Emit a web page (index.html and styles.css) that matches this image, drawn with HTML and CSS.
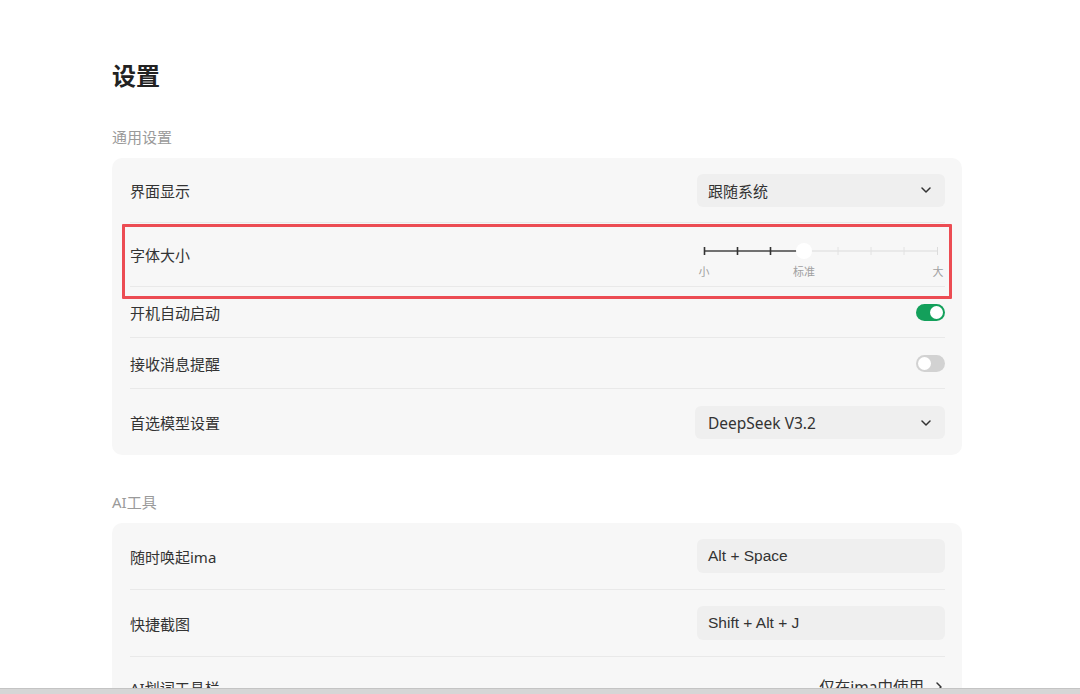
FILE: index.html
```html
<!DOCTYPE html>
<html lang="zh-CN">
<head>
  <meta charset="UTF-8">
  <title>设置</title>
  <link rel="stylesheet" href="styles.css">
</head>
<body>
  <div class="page">
    <h1 class="title">设置</h1>

    <div class="section-label">通用设置</div>
    <div class="card">
      <div class="row row-tall">
        <span class="label">界面显示</span>
        <div class="select">
          <span>跟随系统</span>
          <svg class="chev" width="10" height="6" viewBox="0 0 10 6"><path d="M1 1l4 4 4-4" fill="none" stroke="#333" stroke-width="1.5" stroke-linecap="round" stroke-linejoin="round"/></svg>
        </div>
      </div>
      <div class="row row-slider">
        <span class="label">字体大小</span>
        <svg class="slider" width="248" height="64" viewBox="0 0 248 64">
          <line x1="7" y1="26" x2="107" y2="26" stroke="#444" stroke-width="1.4"/>
          <line x1="107" y1="26" x2="241" y2="26" stroke="#e4e4e4" stroke-width="1.4"/>
          <line x1="7.5" y1="22" x2="7.5" y2="30" stroke="#333" stroke-width="1.6"/>
          <line x1="40.5" y1="22" x2="40.5" y2="30" stroke="#333" stroke-width="1.6"/>
          <line x1="73.5" y1="22" x2="73.5" y2="30" stroke="#333" stroke-width="1.6"/>
          <line x1="141" y1="22" x2="141" y2="30" stroke="#e2e2e2" stroke-width="1"/>
          <line x1="174" y1="22" x2="174" y2="30" stroke="#e2e2e2" stroke-width="1"/>
          <line x1="207" y1="22" x2="207" y2="30" stroke="#e2e2e2" stroke-width="1"/>
          <line x1="240.5" y1="22" x2="240.5" y2="30" stroke="#dcdcdc" stroke-width="1"/>
          <circle cx="107" cy="26" r="8" fill="#fff"/>
          <text x="7" y="51" text-anchor="middle" class="tick-text">小</text>
          <text x="107" y="51" text-anchor="middle" class="tick-text">标准</text>
          <text x="241" y="51" text-anchor="middle" class="tick-text">大</text>
        </svg>
        <div class="highlight-box"></div>
      </div>
      <div class="row row-short">
        <span class="label">开机自动启动</span>
        <span class="toggle on"></span>
      </div>
      <div class="row row-short">
        <span class="label">接收消息提醒</span>
        <span class="toggle"></span>
      </div>
      <div class="row row-tall row-last">
        <span class="label">首选模型设置</span>
        <div class="select select-wide">
          <span class="latin">DeepSeek V3.2</span>
          <svg class="chev" width="10" height="6" viewBox="0 0 10 6"><path d="M1 1l4 4 4-4" fill="none" stroke="#333" stroke-width="1.5" stroke-linecap="round" stroke-linejoin="round"/></svg>
        </div>
      </div>
    </div>

    <div class="section-label section-gap">AI工具</div>
    <div class="card">
      <div class="row row-key">
        <span class="label">随时唤起ima</span>
        <div class="keybox">Alt + Space</div>
      </div>
      <div class="row row-key">
        <span class="label">快捷截图</span>
        <div class="keybox">Shift + Alt + J</div>
      </div>
      <div class="row row-key row-top">
        <span class="label">AI划词工具栏</span>
        <span class="link">仅在ima中使用
          <svg width="8" height="12" viewBox="0 0 8 12"><path d="M2 2l4 4-4 4" fill="none" stroke="#333" stroke-width="1.5" stroke-linecap="round" stroke-linejoin="round"/></svg>
        </span>
      </div>
    </div>
  </div>
  <div class="bottom-edge"></div>
</body>
</html>
```

FILE: styles.css
```css
* {
  box-sizing: border-box;
}

body {
  margin: 0;
  background: #fff;
  font-family: "Noto Sans", "Noto Sans CJK SC", sans-serif;
  color: #333;
  overflow: hidden;
  height: 694px;
}

.page {
  width: 850px;
  margin-left: 112px;
  padding-top: 58px;
}

.title {
  margin: 0;
  font-size: 24px;
  font-weight: 700;
  line-height: 36px;
  color: #222;
}

.section-label {
  margin-top: 32px;
  font-size: 15px;
  line-height: 22px;
  color: #9a9a9a;
}

.section-gap {
  margin-top: 36px;
}

.card {
  margin-top: 10px;
  background: #f7f7f7;
  border-radius: 10px;
  padding: 0 17px 0 18px;
}

.row {
  position: relative;
  display: flex;
  align-items: center;
  justify-content: space-between;
  border-bottom: 1px solid #e9e9e9;
}

.row-tall {
  height: 65px;
}

.row-slider {
  height: 64px;
}

.row-short {
  height: 51px;
}

.row-last {
  height: 66px;
  border-bottom: none;
  padding-top: 1px;
}

.row-key {
  height: 67px;
}

.row-top {
  align-items: flex-start;
  padding-top: 20px;
  border-bottom: none;
}

.label {
  font-size: 15px;
  color: #333;
}

.select {
  width: 248px;
  height: 33px;
  background: #efefef;
  border-radius: 6px;
  display: flex;
  align-items: center;
  justify-content: space-between;
  padding: 0 14px 0 11px;
  font-size: 15px;
  color: #333;
}

.select-wide {
  width: 250px;
  padding-left: 13px;
}

.latin {
  font-size: 15.5px;
}

.slider {
  display: block;
  margin-top: 5px;
}

.tick-text {
  font-size: 11px;
  fill: #a0a0a0;
  font-family: "Noto Sans CJK SC", sans-serif;
}

.highlight-box {
  position: absolute;
  left: -8px;
  right: -7px;
  top: 1px;
  bottom: -13px;
  border: 3px solid #ec4c53;
  border-radius: 1px;
  pointer-events: none;
}

.toggle {
  position: relative;
  width: 29px;
  height: 17px;
  border-radius: 9px;
  background: #d2d2d2;
}

.toggle::after {
  content: "";
  position: absolute;
  top: 2px;
  left: 2px;
  width: 13px;
  height: 13px;
  border-radius: 50%;
  background: #fff;
}

.toggle.on {
  background: #13a05b;
}

.toggle.on::after {
  left: 14px;
}

.keybox {
  width: 248px;
  height: 34px;
  background: #efefef;
  border-radius: 6px;
  display: flex;
  align-items: center;
  padding-left: 11px;
  font-family: "Liberation Sans", Arial, sans-serif;
  font-size: 15.5px;
  color: #333;
}

.link {
  display: flex;
  align-items: center;
  gap: 11px;
  font-size: 15.5px;
  color: #333;
  margin-top: -2px;
  padding-right: 2px;
}

.bottom-edge {
  position: fixed;
  left: 0;
  right: 0;
  bottom: 0;
  height: 6px;
  background: #d6d6d6;
  border-top: 1px solid #c4c4c4;
}
```
